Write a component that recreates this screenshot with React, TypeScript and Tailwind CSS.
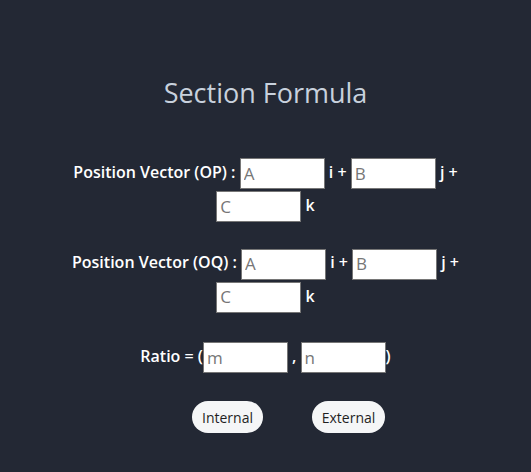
import React from 'react';

const inputCls =
  'w-[85px] h-[31px] border border-[#767676] bg-white px-[3px] text-[17px] font-normal text-black placeholder:text-[#767676] align-middle outline-none';

const VectorRow: React.FC<{ label: string }> = ({ label }) => (
  <div className="mx-auto w-[420px] text-center text-[16px] font-semibold leading-[32px] text-white">
    {label} : <input className={inputCls} placeholder="A" /> i + <input className={inputCls} placeholder="B" /> j +{' '}
    <input className={inputCls} placeholder="C" /> k
  </div>
);

export default function App() {
  return (
    <div
      className="min-h-[472px] w-full bg-[#232834] pt-[76px]"
      style={{ fontFamily: '"Open Sans", "Liberation Sans", sans-serif' }}
    >
      <h1 className="text-center text-[27px] font-normal leading-[34px] text-[#c8d1dd]">Section Formula</h1>

      <div className="mt-[46px]">
        <VectorRow label="Position Vector (OP)" />
      </div>
      <div className="mt-[24px]">
        <VectorRow label="Position Vector (OQ)" />
      </div>

      <div className="mt-[27px] text-center text-[16px] font-semibold leading-[32px] text-white">
        Ratio = (<input className={inputCls} placeholder="m" /> , <input className={inputCls} placeholder="n" />)
      </div>

      <div className="mt-[28px] flex justify-center gap-[49px] pl-[46px]">
        <button className="h-[32px] w-[71px] rounded-full bg-[#f5f6f7] text-[14px] text-[#1f1f1f]">Internal</button>
        <button className="h-[32px] w-[73px] rounded-full bg-[#f5f6f7] text-[14px] text-[#1f1f1f]">External</button>
      </div>
    </div>
  );
}
